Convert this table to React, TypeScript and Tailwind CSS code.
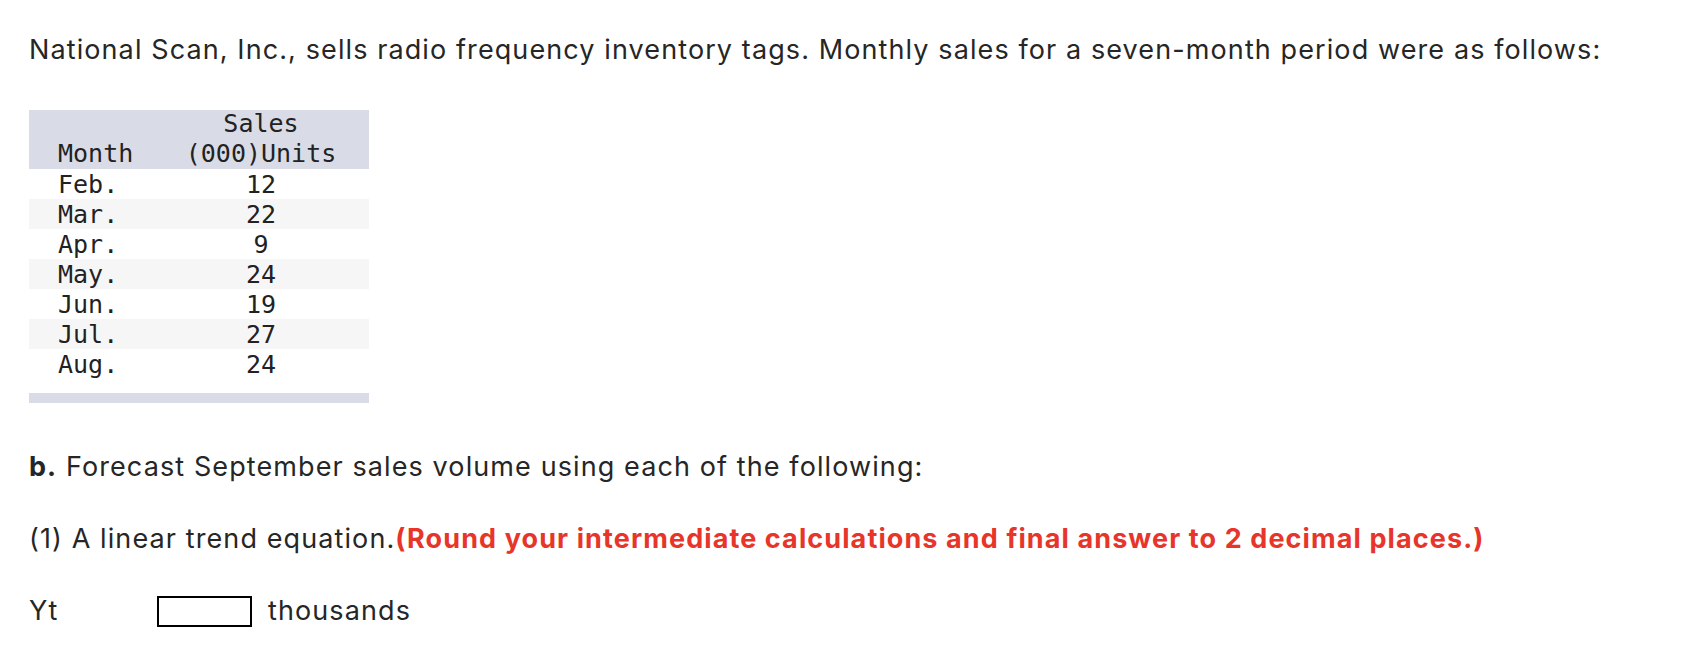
const rows: Array<{ month: string; units: number; shaded: boolean }> = [
  { month: 'Feb.', units: 12, shaded: false },
  { month: 'Mar.', units: 22, shaded: true },
  { month: 'Apr.', units: 9, shaded: false },
  { month: 'May.', units: 24, shaded: true },
  { month: 'Jun.', units: 19, shaded: false },
  { month: 'Jul.', units: 27, shaded: true },
  { month: 'Aug.', units: 24, shaded: false },
];

function SalesTable() {
  return (
    <div className="mt-[40px] w-[340px] font-['DejaVu_Sans_Mono',monospace] text-[25px] leading-[30px] tracking-normal text-[#222]">
      <div className="flex h-[59px] items-end bg-[#d9dce6]">
        <div className="w-[124px] pl-[29px]">Month</div>
        <div className="flex-1 text-center">
          Sales
          <br />
          (000)Units
        </div>
      </div>
      {rows.map((row) => (
        <div key={row.month} className={`flex h-[30px] ${row.shaded ? 'bg-[#f6f6f6]' : 'bg-white'}`}>
          <div className="w-[124px] pl-[29px] pt-[1px]">{row.month}</div>
          <div className="flex-1 pt-[1px] text-center">{row.units}</div>
        </div>
      ))}
      <div className="mt-[14px] h-[10px] bg-[#d9dce6]" />
    </div>
  );
}

export default function App() {
  return (
    <div className="min-h-[650px] bg-white px-[29px] pt-[30px] font-['Inter',sans-serif] text-[27px] tracking-[1.1px] text-[#262626]">
      <p className="leading-[40px]">
        National Scan, Inc., sells radio frequency inventory tags. Monthly sales for a seven-month period were as follows:
      </p>
      <SalesTable />
      <p className="mt-[44px] leading-[40px]">
        <b>b.</b> Forecast September sales volume using each of the following:
      </p>
      <p className="mt-[32px] leading-[40px]">
        (1) A linear trend equation.
        <span className="font-bold text-[#e8352a]">
          (Round your intermediate calculations and final answer to 2 decimal places.)
        </span>
      </p>
      <div className="mt-[32px] flex h-[40px] items-center">
        <span className="w-[128px]">Yt</span>
        <input
          type="text"
          aria-label="Yt"
          className="h-[31px] w-[95px] border-2 border-black bg-white px-1 outline-none"
        />
        <span className="ml-[16px]">thousands</span>
      </div>
    </div>
  );
}
